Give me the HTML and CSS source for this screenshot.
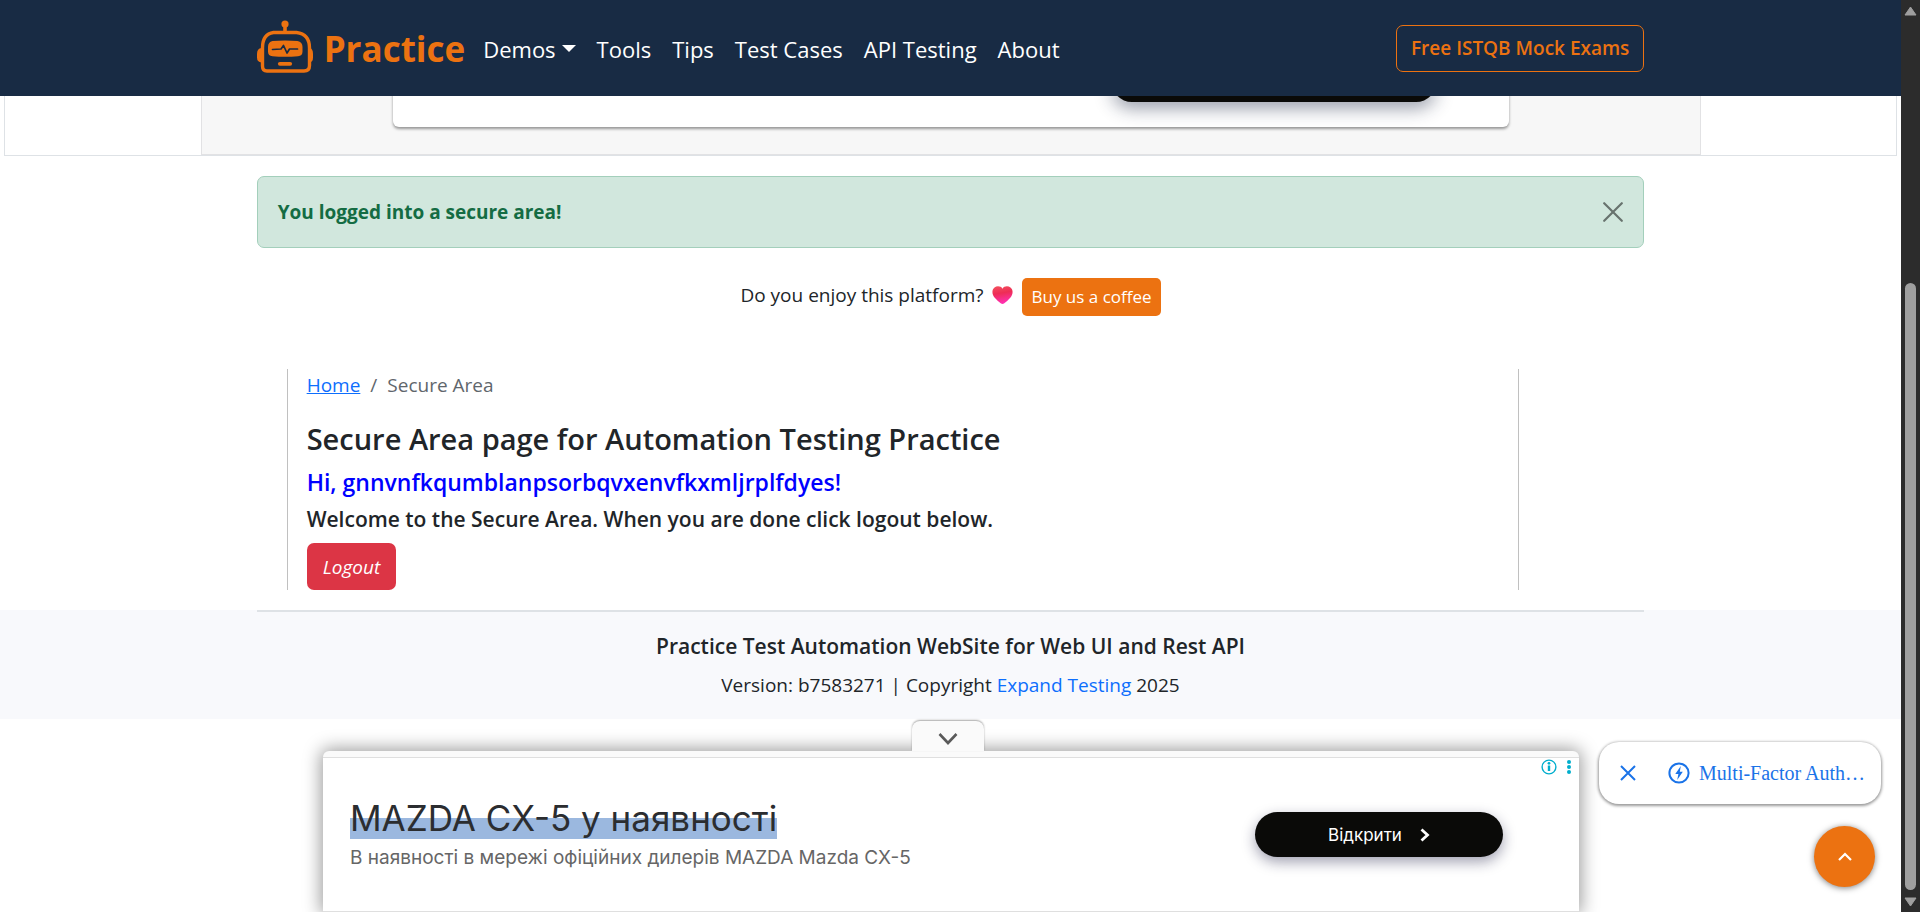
FILE: index.html
```html
<!DOCTYPE html>
<html lang="en">
<head>
<meta charset="utf-8">
<title>Secure Area page for Automation Testing Practice</title>
<link rel="stylesheet" href="styles.css">
</head>
<body>
<div class="window">
  <div class="page">
    <header class="navbar">
      <div class="container navbar-inner">
        <a class="brand" href="#">
          <svg class="brand-icon" viewBox="0 0 56 54" fill="none" stroke="#ec7211" aria-hidden="true">
            <circle cx="28" cy="4" r="3.6" fill="#ec7211" stroke="none"/>
            <path d="M28 6v6" stroke-width="3.6"/>
            <path d="M16.500 12.500H39.500Q52.500 14 52.500 28V45.500Q52.500 51 47 51H10Q5.500 51 5.500 46V28Q5.500 14 16.500 12.500Z" stroke-width="3.400"/>
            <path d="M4.500 28Q0 28.500 0 34V37.500Q0 42 4.500 42.500ZM52.500 28Q56 28.500 56 34V37.500Q56 42 52.500 42.500Z" fill="#ec7211" stroke="none"/>
            <path d="M15.500 21Q28 20 40.500 21Q45.500 22 45.500 27V31.500Q45.500 36 41 36.200Q28 37.500 15.500 36.200Q11 36 11 31.500V27Q11 22 15.500 21Z" fill="#ec7211" stroke="none"/>
            <path d="M15.500 29.500L24 29L26.500 25.500L30 33L32.500 29H40.500" stroke="#182b44" stroke-width="1.700" stroke-linecap="round" stroke-linejoin="round"/>
            <path d="M22.800 43.800H33.200" stroke-width="3.800" stroke-linecap="round"/>
          </svg>
          <span>Practice</span>
        </a>
        <nav class="nav">
          <a class="dropdown" href="#">Demos</a>
          <a href="#">Tools</a>
          <a href="#">Tips</a>
          <a href="#">Test Cases</a>
          <a href="#">API Testing</a>
          <a href="#">About</a>
        </nav>
        <a class="exam-link" href="#">Free ISTQB Mock Exams</a>
      </div>
    </header>

    <div class="top-ad">
      <div class="top-ad-frame">
        <div class="top-ad-card"><div class="top-ad-pill"></div></div>
      </div>
    </div>

    <main class="container">
      <div class="alert" role="alert">
        <b>You logged into a secure area!</b>
        <button class="alert-close" type="button" aria-label="Close">
          <svg viewBox="0 0 20 20" fill="none" stroke="currentColor" stroke-width="2.200" stroke-linecap="round"><path d="M1.200 1.200L18.800 18.800M18.800 1.200L1.200 18.800"/></svg>
        </button>
      </div>

      <p class="support">
        <span>Do you enjoy this platform?</span>
        <svg class="heart" viewBox="0 0 21 18" aria-hidden="true">
          <defs><linearGradient id="heart" x1="0" y1="0" x2="0.200" y2="1"><stop offset="0" stop-color="#f4535f"/><stop offset="0.450" stop-color="#ee2d55"/><stop offset="1" stop-color="#ff2fb0"/></linearGradient></defs>
          <path d="M10.500 2.700C12 0 16 -0.500 18.500 1.500C21.500 4 21 8.500 18.500 11.500Q15 15.500 12 17.500Q10.500 18.400 9 17.500Q6 15.500 2.500 11.500C0 8.500 -0.500 4 2.500 1.500C5 -0.500 9 0 10.500 2.700Z" fill="url(#heart)"/>
        </svg>
        <a class="coffee" href="#">Buy us a coffee</a>
      </p>

      <section class="secure">
        <nav class="breadcrumb" aria-label="breadcrumb">
          <a href="#">Home</a><span>/</span><span>Secure Area</span>
        </nav>
        <h1>Secure Area page for Automation Testing Practice</h1>
        <h2>Hi, gnnvnfkqumblanpsorbqvxenvfkxmljrplfdyes!</h2>
        <h3>Welcome to the Secure Area. When you are done click logout below.</h3>
        <a class="logout" href="#"><i>Logout</i></a>
      </section>
    </main>

    <footer class="footer">
      <div class="container footer-inner">
        <h4>Practice Test Automation WebSite for Web UI and Rest API</h4>
        <p>Version: b7583271 | Copyright <a href="#">Expand Testing</a> 2025</p>
      </div>
    </footer>

    <aside class="anchor-ad">
      <button class="anchor-toggle" type="button" aria-label="Collapse">
        <svg viewBox="0 0 20 14" fill="none" stroke="#5a5a5a" stroke-width="2.600"><path d="M1.500 2L10 11L18.500 2"/></svg>
      </button>
      <div class="anchor-body">
        <div class="anchor-text">
          <div><mark>MAZDA CX-5 у наявності</mark></div>
          <p>В наявності в мережі офіційних дилерів MAZDA Mazda CX-5</p>
        </div>
        <a class="open-link" href="#">Відкрити
          <svg viewBox="0 0 10 14" fill="none" stroke="#fff" stroke-width="2.800"><path d="M1.500 1.500L7.500 7L1.500 12.500"/></svg>
        </a>
        <div class="ad-choices">
          <svg viewBox="0 0 32 16" fill="none" stroke="#00aecd" aria-hidden="true">
            <circle cx="8" cy="8" r="6.900" stroke-width="1.400"/>
            <path d="M8 6.500V12" stroke-width="2.400"/><circle cx="8" cy="4.300" r="1.400" fill="#00aecd" stroke="none"/>
            <g fill="#00aecd" stroke="none"><circle cx="28" cy="3" r="2"/><circle cx="28" cy="8" r="2"/><circle cx="28" cy="13" r="2"/></g>
          </svg>
        </div>
      </div>
    </aside>

    <div class="suggestion">
      <button type="button" aria-label="Dismiss">
        <svg class="dismiss" viewBox="0 0 16 16" fill="none" stroke="#1a73e8" stroke-width="2"><path d="M1 1L15 15M15 1L1 15"/></svg>
      </button>
      <svg class="bolt" viewBox="0 0 22 22" fill="none" stroke="#1a73e8" stroke-width="2" aria-hidden="true"><circle cx="11" cy="11" r="9.600"/><path d="M12.800 4L7.300 12H10.400L9.200 18L14.800 9.800H11.800Z" fill="#1a73e8" stroke="none"/></svg>
      <a href="#">Multi-Factor Auth…</a>
    </div>

    <button class="to-top" type="button" aria-label="Back to top">
      <svg viewBox="0 0 14 9" fill="none" stroke="#fff" stroke-width="2.200"><path d="M1 8L7 2L13 8"/></svg>
    </button>
  </div>

  <div class="scrollbar" aria-hidden="true">
    <svg viewBox="0 0 13 10"><path d="M6.500 1L12 9H1Z" fill="#9f9f9f" stroke="#9f9f9f" stroke-linejoin="round"/></svg>
    <div class="track"><div class="thumb"></div></div>
    <svg viewBox="0 0 13 10"><path d="M6.500 9L12 1H1Z" fill="#9f9f9f" stroke="#9f9f9f" stroke-linejoin="round"/></svg>
  </div>
</div>
</body>
</html>
```
FILE: styles.css
```css
* { box-sizing: border-box; }

body {
  margin: 0;
  background: #fff;
  color: #212529;
  font: 19px/28px "Open Sans", "Noto Sans", sans-serif;
}

a { color: #0d6efd; text-decoration: none; }
h1, h2, h3, h4, p { margin: 0; }
h1, h2, h3, h4 { font-weight: 600; }
button { padding: 0; border: 0; background: none; cursor: pointer; }
svg { display: block; flex: none; }

.window { display: flex; height: 100vh; overflow: hidden; }
.page { position: relative; flex: 1; overflow: hidden; }
.container { width: 73%; margin: 0 auto; }

/* Header */
.navbar {
  position: relative;
  z-index: 2;
  background: #182b44;
}
.navbar-inner { display: flex; align-items: center; height: 96px; padding-top: 1px; }
.brand {
  display: flex;
  align-items: center;
  gap: 11px;
  color: #ec7211;
  font-size: 35px;
  font-weight: 700;
}
.brand-icon { width: 56px; height: 54px; margin-bottom: 3px; }
.nav { display: flex; gap: 21px; margin-left: 18px; font-size: 22px; }
.nav a { color: #fff; }
.dropdown { display: flex; align-items: center; gap: 6px; }
.dropdown::after {
  content: "";
  border: 7px solid transparent;
  border-top-color: #fff;
  border-bottom: 0;
}
.exam-link {
  margin-left: auto;
  padding: 8px 14px;
  border: 1px solid #ec7211;
  border-radius: 7px;
  color: #ec7211;
  font-weight: 600;
  line-height: 29px;
}

/* Advertisement scrolled partly beneath the header */
.top-ad {
  margin: -60px 4px 20px;
  border: 1px solid #dee2e6;
}
.top-ad-frame {
  width: 1500px;
  max-width: 100%;
  margin: 0 auto;
  padding: 0 191px 27px;
  border: 1px solid #e2e2e4;
  background: #f7f7f7;
}
.top-ad-card {
  display: flex;
  justify-content: flex-end;
  padding: 43px 72px 25px;
  border-radius: 6px;
  background: #fff;
  box-shadow: 0 2px 3px rgba(0, 0, 0, .4);
}
.top-ad-pill {
  width: 326px;
  height: 21px;
  border-radius: 0 0 24px 24px;
  background: #0a0a08;
  box-shadow: 0 6px 18px rgba(20, 30, 60, .45);
}

/* Alert */
.alert {
  display: flex;
  align-items: center;
  justify-content: space-between;
  min-height: 72px;
  padding: 0 20px;
  border: 1px solid #a3cfbb;
  border-radius: 7px;
  background: #d1e7dd;
  color: #146c43;
}
.alert-close { color: #68736e; }
.alert-close svg { width: 20px; height: 20px; }

.support {
  display: flex;
  align-items: flex-start;
  justify-content: center;
  gap: 9px;
  margin: 30px 0 53px;
  line-height: 34px;
}
.heart { width: 21px; height: 18px; margin-top: 8px; }
.coffee {
  padding: 5px 9px;
  border-radius: 5px;
  background: #ec7211;
  color: #fff;
  font-size: 17px;
  line-height: 28px;
}

/* Secure area */
.secure {
  margin: 0 125px 20px 30px;
  padding: 0 19px;
  border: solid #c0c0c0;
  border-width: 0 1px;
}
.breadcrumb { display: flex; gap: 10px; padding-bottom: 22px; line-height: 32px; color: #5f666c; }
.breadcrumb a { text-decoration: underline; }
h1 { font-size: 29px; line-height: 32px; margin-bottom: 12px; }
h2 { font-size: 23px; line-height: 30px; margin-bottom: 8px; color: #00f; }
h3 { font-size: 21px; line-height: 28px; margin-bottom: 10px; }
.logout {
  display: inline-block;
  padding: 10px 16px 9px;
  border-radius: 7px;
  background: #dc3545;
  color: #fff;
  vertical-align: top;
}

/* Footer */
.footer { background: #f8f9fc; text-align: center; }
.footer-inner { padding: 20px 0; border-top: 2px solid #dee2e6; }
.footer h4 { margin-bottom: 11px; font-size: 21px; }

/* Anchored advertisement */
.anchor-ad {
  position: absolute;
  right: 322px;
  bottom: 0;
  left: 323px;
  border-radius: 6px 6px 0 0;
  background: #fafafa;
  box-shadow: 0 0 18px 2px rgba(0, 0, 0, .4);
}
.anchor-toggle {
  position: absolute;
  bottom: 100%;
  left: 589px;
  display: grid;
  place-items: center;
  width: 72px;
  height: 30px;
  padding-top: 6px;
  border-radius: 8px 8px 0 0;
  background: #fafafa;
  box-shadow: 0 -1px 2px rgba(0, 0, 0, .35);
}
.anchor-toggle svg { width: 20px; height: 14px; }
.anchor-body {
  display: flex;
  align-items: center;
  justify-content: space-between;
  height: 155px;
  margin-top: 6px;
  padding: 0 76px 0 27px;
  border-top: 1px solid #dfdfdf;
  border-bottom: 1px solid #dfdfdf;
  background: #fff;
}
.anchor-text { color: #666; font-family: Inter, Roboto, sans-serif; font-size: 19px; line-height: 30px; }
.anchor-text p { margin-top: 3px; }
mark {
  background: linear-gradient(transparent 50%, #9bb8df 50%);
  color: #2b2d30;
  font-size: 35px;
  line-height: 44px;
}
.open-link {
  display: flex;
  align-items: center;
  justify-content: center;
  gap: 18px;
  width: 248px;
  height: 45px;
  border-radius: 23px;
  background: #0a0a08;
  box-shadow: 0 5px 14px rgba(20, 20, 60, .4);
  color: #fff;
  font: 17px Inter, sans-serif;
}
.open-link svg { width: 10px; height: 14px; }
.ad-choices { position: absolute; top: 8px; right: 6px; }
.ad-choices svg { width: 32px; height: 16px; }

/* Floating suggestion and back-to-top */
.suggestion {
  position: absolute;
  right: 20px;
  bottom: 108px;
  display: flex;
  align-items: center;
  width: 282px;
  height: 62px;
  padding: 0 8px 0 21px;
  border-radius: 20px;
  background: #fff;
  box-shadow: 0 1px 3px 1px rgba(0, 0, 0, .4);
}
.dismiss { width: 16px; height: 16px; }
.bolt { width: 22px; height: 22px; margin: 0 9px 0 32px; }
.suggestion a {
  color: #1a73e8;
  font: 20px/30px "Liberation Serif", serif;
  white-space: nowrap;
}
.to-top {
  position: absolute;
  right: 26px;
  bottom: 25px;
  display: grid;
  place-items: center;
  width: 61px;
  height: 61px;
  border-radius: 50%;
  background: #ec7211;
  box-shadow: 0 1px 6px rgba(0, 0, 0, .5);
}
.to-top svg { width: 14px; height: 9px; }

/* Window scrollbar */
.scrollbar {
  display: flex;
  flex-direction: column;
  align-items: center;
  gap: 7px;
  width: 19px;
  padding: 6px 0 5px;
  background: #2c2c2c;
}
.scrollbar svg { width: 13px; height: 10px; }
.track { display: flex; flex: 1; align-items: flex-end; }
.thumb { width: 11px; height: 70%; border-radius: 6px; background: #9f9f9f; }
```
